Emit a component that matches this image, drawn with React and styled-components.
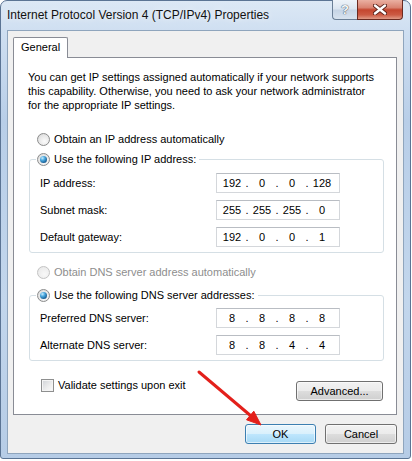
import React from "react"
import styled, { createGlobalStyle } from "styled-components"

const GlobalStyle = createGlobalStyle`
  html, body {
    margin: 0;
    padding: 0;
    background: #ffffff;
  }
  body {
    font-family: "Liberation Sans", Arial, sans-serif;
    font-size: 11px;
    color: #000000;
  }
`

const Screen = styled.div`
  position: relative;
  width: 412px;
  height: 461px;
  overflow: hidden;
`

const Window = styled.div`
  box-sizing: border-box;
  width: 411px;
  height: 459px;
  border: 1px solid #5b7494;
  border-radius: 7px 7px 3px 3px;
  background: linear-gradient(
    180deg,
    #dce8f5 0px,
    #cfdff1 30px,
    #b8cee8 120px,
    #c2d6ec 300px,
    #b6cce6 100%
  );
  display: flex;
  flex-direction: column;
`

const TitleBar = styled.div`
  height: 29px;
  display: flex;
  align-items: flex-start;
  padding: 0 7px 0 6px;
`

const Title = styled.div`
  flex: 1;
  font-size: 12px;
  line-height: 29px;
  color: #111;
  text-shadow: 0 0 6px rgba(255, 255, 255, 0.9);
`

const Controls = styled.div`
  display: flex;
  margin-top: -1px;
`

const HelpButton = styled.div`
  box-sizing: border-box;
  width: 25px;
  height: 20px;
  border: 1px solid #6b7f96;
  border-top: none;
  border-right: none;
  border-radius: 0 0 0 4px;
  background: linear-gradient(180deg, #eef3f9 0%, #dbe5f0 48%, #c6d4e5 52%, #d8e3ef 100%);
  display: flex;
  align-items: center;
  justify-content: center;
  font-weight: bold;
  font-size: 13px;
  color: #f7f9fb;
  text-shadow: 0 0 1px #3a4656, 0 0 1px #3a4656;
`

const CloseButton = styled.div`
  box-sizing: border-box;
  width: 46px;
  height: 20px;
  border: 1px solid #6b2a20;
  border-top: none;
  border-radius: 0 0 4px 0;
  background: linear-gradient(180deg, #eab0a2 0%, #d98371 40%, #c4462f 52%, #cc5a43 78%, #e09a86 100%);
  display: flex;
  align-items: center;
  justify-content: center;
`

const Client = styled.div`
  flex: 1;
  margin: 0 6px 4px 6px;
  border: 1px solid #8fa5bd;
  background: #f0f0f0;
  padding: 6px 6px 0 5px;
  display: flex;
  flex-direction: column;
`

const TabStrip = styled.div`
  display: flex;
  position: relative;
  z-index: 1;
  margin-bottom: -1px;
`

const Tab = styled.div`
  height: 20px;
  padding: 0 7px;
  border: 1px solid #898c95;
  border-bottom: none;
  border-radius: 2px 2px 0 0;
  background: #ffffff;
  line-height: 19px;
`

const Panel = styled.div`
  border: 1px solid #898c95;
  background: #ffffff;
  padding: 12px 12px 13px 15px;
`

const Intro = styled.p`
  margin: 0 0 0 -1px;
  line-height: 14px;
`

const RadioRow = styled.label`
  display: flex;
  align-items: center;
  gap: 4px;
  height: 16px;
  padding-left: 8px;
  margin-top: ${p => p.$top}px;
  color: ${p => (p.$disabled ? "#8e8e8e" : "#000")};
`

const RadioDot = styled.span`
  box-sizing: border-box;
  width: 13px;
  height: 13px;
  border-radius: 50%;
  border: 1px solid ${p => (p.$disabled ? "#c3c3c3" : "#8b8c8c")};
  background: ${p =>
    p.$disabled
      ? "radial-gradient(circle at 60% 65%, #f8f8f8, #e6e6e6)"
      : "radial-gradient(circle at 60% 65%, #fbfbfb 0%, #e6e6e6 60%, #cfcfcf 100%)"};
  display: flex;
  align-items: center;
  justify-content: center;

  &::after {
    content: "";
    display: ${p => (p.$checked ? "block" : "none")};
    width: 7px;
    height: 7px;
    border-radius: 50%;
    background: radial-gradient(circle at 35% 30%, #c6ecff 0%, #4aa7dd 35%, #10538a 80%);
  }
`

const Group = styled.fieldset`
  margin: ${p => p.$top}px 0 0 0;
  padding: ${p => p.$pad}px 0 5px 10px;
  border: 1px solid #d5dfe5;
  border-radius: 3px;
  min-width: 0;
`

const Legend = styled.legend`
  margin-left: -4px;
  padding: 0 3px 0 1px;
  height: 16px;
  display: flex;
  align-items: center;
  gap: 4px;
`

const Rows = styled.div`
  display: grid;
  grid-template-columns: 176px 124px;
  row-gap: 7px;
  align-items: center;
`

const Label = styled.span`
  line-height: 20px;
`

const AddressBox = styled.div`
  box-sizing: border-box;
  height: 20px;
  border: 1px solid #d4d7db;
  border-top-color: #b9bdc3;
  background: #ffffff;
  padding-left: 3px;
  display: flex;
  align-items: center;
`

const Octet = styled.span`
  width: 24px;
  text-align: center;
`

const Dot = styled.span`
  width: 6px;
  text-align: center;
`

const BottomRow = styled.div`
  margin-top: 20px;
  display: flex;
  justify-content: space-between;
  align-items: flex-start;
`

const CheckRow = styled.label`
  display: flex;
  align-items: center;
  gap: 4px;
  margin-top: -3px;
  padding-left: 12px;
  height: 14px;
`

const CheckBox = styled.span`
  box-sizing: border-box;
  width: 13px;
  height: 13px;
  border: 1px solid #8e8f8f;
  background: linear-gradient(135deg, #cfd2d6 0%, #eeeeee 60%, #fbfbfb 100%);
  box-shadow: inset 0 0 0 1px #f4f4f4;
`

const Button = styled.div`
  box-sizing: border-box;
  width: ${p => p.$width}px;
  height: 20px;
  margin-right: ${p => p.$right || 0}px;
  border: 1px solid ${p => (p.$primary ? "#3c7fb1" : "#707070")};
  border-radius: 3px;
  background: ${p =>
    p.$primary
      ? "linear-gradient(180deg, #eaf6fd 0%, #d9f0fc 50%, #bee6fd 51%, #a7d9f5 100%)"
      : "linear-gradient(180deg, #f2f2f2 0%, #ebebeb 50%, #dddddd 51%, #cfcfcf 100%)"};
  box-shadow: inset 0 0 0 1px rgba(255, 255, 255, 0.6);
  display: flex;
  align-items: center;
  justify-content: center;
`

const Footer = styled.div`
  display: flex;
  justify-content: flex-end;
  gap: 9px;
  margin-top: 9px;
`

const Arrow = styled.svg`
  position: absolute;
  left: 0;
  top: 0;
  pointer-events: none;
`

function Address({ value }) {
  const parts = value.split(".")
  return (
    <AddressBox>
      {parts.map((part, i) => (
        <React.Fragment key={i}>
          {i > 0 && <Dot>.</Dot>}
          <Octet>{part}</Octet>
        </React.Fragment>
      ))}
    </AddressBox>
  )
}

const ipRows = [
  ["IP address:", "192.0.0.128"],
  ["Subnet mask:", "255.255.255.0"],
  ["Default gateway:", "192.0.0.1"],
]

const dnsRows = [
  ["Preferred DNS server:", "8.8.8.8"],
  ["Alternate DNS server:", "8.8.4.4"],
]

export default function App() {
  return (
    <Screen>
      <GlobalStyle />
      <Window>
        <TitleBar>
          <Title>Internet Protocol Version 4 (TCP/IPv4) Properties</Title>
          <Controls>
            <HelpButton>?</HelpButton>
            <CloseButton>
              <svg width="14" height="11" viewBox="0 0 14 11">
                <path d="M2 1.5 L12 9.5 M12 1.5 L2 9.5" stroke="#5a2119" strokeWidth="4.2" strokeLinecap="round" />
                <path d="M2 1.5 L12 9.5 M12 1.5 L2 9.5" stroke="#ffffff" strokeWidth="2.4" strokeLinecap="round" />
              </svg>
            </CloseButton>
          </Controls>
        </TitleBar>
        <Client>
          <TabStrip>
            <Tab>General</Tab>
          </TabStrip>
          <Panel>
            <Intro>
              You can get IP settings assigned automatically if your network supports
              <br />
              this capability. Otherwise, you need to ask your network administrator
              <br />
              for the appropriate IP settings.
            </Intro>
            <RadioRow $top={19}>
              <RadioDot />
              Obtain an IP address automatically
            </RadioRow>
            <Group $top={4} $pad={6}>
              <Legend>
                <RadioDot $checked />
                Use the following IP address:
              </Legend>
              <Rows>
                {ipRows.map(([label, value]) => (
                  <React.Fragment key={label}>
                    <Label>{label}</Label>
                    <Address value={value} />
                  </React.Fragment>
                ))}
              </Rows>
            </Group>
            <RadioRow $top={11} $disabled>
              <RadioDot $disabled />
              Obtain DNS server address automatically
            </RadioRow>
            <Group $top={7} $pad={5}>
              <Legend>
                <RadioDot $checked />
                Use the following DNS server addresses:
              </Legend>
              <Rows>
                {dnsRows.map(([label, value]) => (
                  <React.Fragment key={label}>
                    <Label>{label}</Label>
                    <Address value={value} />
                  </React.Fragment>
                ))}
              </Rows>
            </Group>
            <BottomRow>
              <CheckRow>
                <CheckBox />
                Validate settings upon exit
              </CheckRow>
              <Button $width={87} $right={1}>Advanced...</Button>
            </BottomRow>
          </Panel>
          <Footer>
            <Button $width={71} $primary>OK</Button>
            <Button $width={72}>Cancel</Button>
          </Footer>
        </Client>
      </Window>
      <Arrow width="412" height="461" viewBox="0 0 412 461">
        <line x1="199" y1="372" x2="251" y2="416" stroke="#e3201b" strokeWidth="3" strokeLinecap="round" />
        <polygon points="261,425 246.5,419.8 253.8,411.2" fill="#e3201b" stroke="#e3201b" strokeWidth="1" strokeLinejoin="round" />
      </Arrow>
    </Screen>
  )
}
